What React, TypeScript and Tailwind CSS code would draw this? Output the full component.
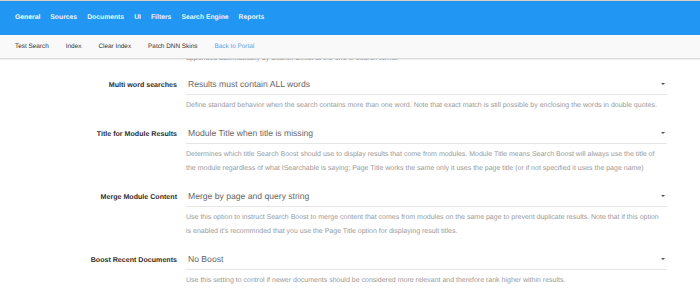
import { useState } from 'react';

const TABS = ['General', 'Sources', 'Documents', 'UI', 'Filters', 'Search Engine', 'Reports'];

const ACTIONS = ['Test Search', 'Index', 'Clear Index', 'Patch DNN Skins'];

const SETTINGS = [
  {
    id: 'multi',
    label: 'Multi word searches',
    value: 'Results must contain ALL words',
    help: [
      'Define standard behavior when the search contains more than one word. Note that exact match is still possible by enclosing the words in double quotes.',
    ],
  },
  {
    id: 'title',
    label: 'Title for Module Results',
    value: 'Module Title when title is missing',
    help: [
      'Determines which title Search Boost should use to display results that come from modules. Module Title means Search Boost will always use the title of',
      'the module regardless of what ISearchable is saying; Page Title works the same only it uses the page title (or if not specified it uses the page name)',
    ],
  },
  {
    id: 'merge',
    label: 'Merge Module Content',
    value: 'Merge by page and query string',
    help: [
      'Use this option to instruct Search Boost to merge content that comes from modules on the same page to prevent duplicate results. Note that if this option',
      "is enabled it's recommnded that you use the Page Title option for displaying result titles.",
    ],
  },
  {
    id: 'boost',
    label: 'Boost Recent Documents',
    value: 'No Boost',
    help: [
      'Use this setting to control if newer documents should be considered more relevant and therefore rank higher within results.',
    ],
  },
];

function SettingRow({ label, value, help }: { label: string; value: string; help: string[] }) {
  return (
    <div className="flex">
      <div className="w-[177px] shrink-0 pt-[16px] text-right text-[7.1px] leading-[8px] font-bold text-[#2f2f2f]">
        {label}
      </div>
      <div className="ml-[9px] w-[481px]">
        <div className="flex h-[30px] items-end justify-between border-b border-[#e6e6e6] pb-[5px] pl-[2px] pr-[2px]">
          <span className="text-[8.6px] leading-none text-[#666]">{value}</span>
          <span className="mb-[4px] h-0 w-0 border-x-[2px] border-t-[2.5px] border-x-transparent border-t-[#555]" />
        </div>
        <div className="pt-[4px] text-[7px] leading-[14px] text-[#9a9a9a]">
          {help.map((line, i) => (
            <div key={i} className="whitespace-nowrap">
              {line}
            </div>
          ))}
        </div>
      </div>
    </div>
  );
}

export default function App() {
  const [tab] = useState('General');

  return (
    <div className="h-[294px] overflow-hidden bg-white font-['Liberation_Sans',Arial,sans-serif] [text-rendering:geometricPrecision]">
      {/* Main tabs */}
      <div className="border-t border-[#d9cfc2] bg-[#2196f3]">
        <div className="flex h-[34px] items-center gap-[10px] px-[15px]">
          {TABS.map((t) => (
            <span
              key={t}
              className={`text-[6.8px] font-bold ${t === tab ? 'text-white' : 'text-white/95'}`}
            >
              {t}
            </span>
          ))}
        </div>
      </div>

      {/* Action bar */}
      <div className="relative z-10 flex h-[24px] items-center gap-[17px] border-b border-[#dcdcdc] bg-[#f9f9f9] px-[15px] shadow-[0_1px_1px_rgba(0,0,0,0.06)]">
        {ACTIONS.map((a) => (
          <span key={a} className="text-[6.4px] text-[#333]">
            {a}
          </span>
        ))}
        <span className="text-[6.4px] text-[#5b9ee8]">Back to Portal</span>
      </div>

      {/* Settings */}
      <div className="relative">
        <div className="-mt-[4px] h-[7px] overflow-hidden pl-[186px] text-[7px] leading-[8px] text-[#9a9a9a]">
          appended automatically by Search Boost at the end of search terms.
        </div>
        <div className="flex flex-col gap-[1px] pt-[3px]">
          {SETTINGS.map((s) => (
            <SettingRow key={s.id} label={s.label} value={s.value} help={s.help} />
          ))}
        </div>
      </div>
    </div>
  );
}
